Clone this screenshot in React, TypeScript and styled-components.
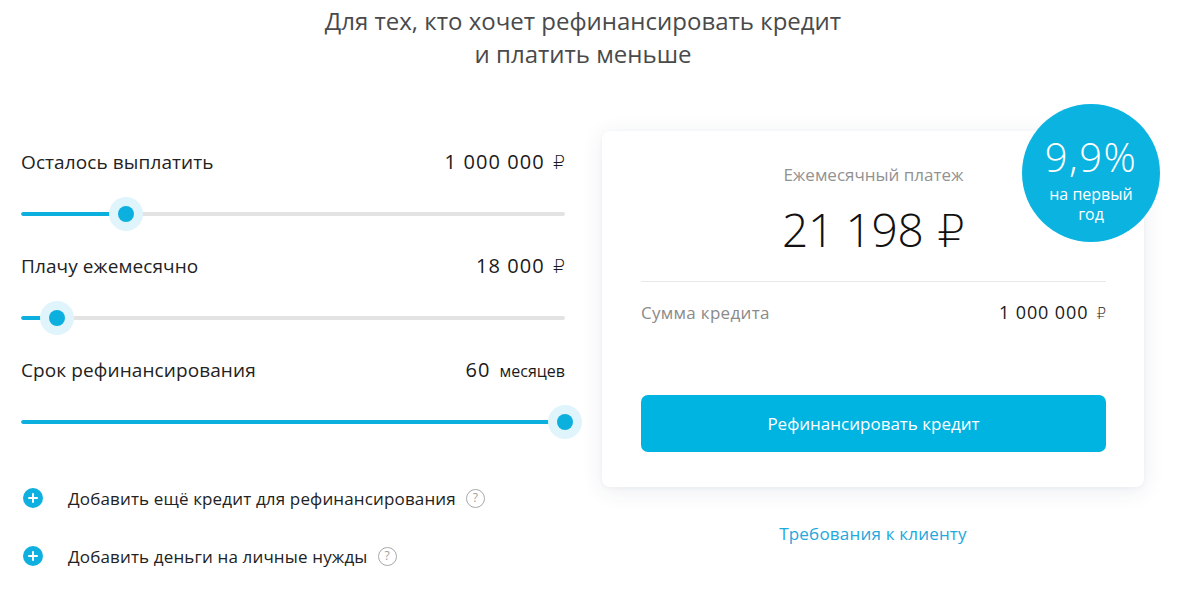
import React from "react";
import styled, { createGlobalStyle } from "styled-components";

const Global = createGlobalStyle`
  html, body { margin: 0; padding: 0; background: #fff; }
  body { font-family: "Open Sans", "Noto Sans", "DejaVu Sans", sans-serif; color: #222; }
  * { box-sizing: border-box; }
`;

const Page = styled.div`
  width: 1200px;
  height: 592px;
  overflow: hidden;
`;

const Title = styled.h1`
  margin: 0;
  padding-top: 4px;
  width: 1166px;
  text-align: center;
  font-size: 24px;
  line-height: 33px;
  font-weight: 400;
  color: #4a4a4a;
`;

const Main = styled.div`
  display: flex;
  align-items: flex-start;
  gap: 37px;
  padding-left: 21px;
  margin-top: 61px;
`;

const LeftCol = styled.div`
  width: 544px;
  padding-top: 19px;
  display: flex;
  flex-direction: column;
`;

const Block = styled.div`
  display: flex;
  flex-direction: column;
`;

const LabelRow = styled.div`
  display: flex;
  justify-content: space-between;
  align-items: baseline;
  height: 24px;
  line-height: 24px;
  font-size: 19px;
  color: #222;
`;

const Label = styled.span`
  letter-spacing: 0.1px;
`;

const Value = styled.span`
  font-size: 20px;
  letter-spacing: 1.1px;
  font-weight: 400;
  color: #1a1a1a;
`;

const Unit = styled.span<{ $small?: boolean }>`
  margin-left: ${(p) => (p.$small ? "9px" : "8px")};
  font-size: ${(p) => (p.$small ? "16px" : "19px")};
  font-family: ${(p) => (p.$small ? "inherit" : `"DejaVu Sans", sans-serif`)};
  font-weight: ${(p) => (p.$small ? 400 : 300)};
  color: #1a1a1a;
`;

const SliderWrap = styled.div`
  position: relative;
  height: 34px;
  margin: 23px 0;
  display: flex;
  align-items: center;
`;

const Track = styled.div`
  width: 100%;
  height: 4px;
  border-radius: 2px;
  background: #e3e3e3;
  overflow: hidden;
`;

const Fill = styled.div`
  height: 100%;
  background: #0bb0df;
  border-radius: 2px;
`;

const Thumb = styled.div`
  position: absolute;
  top: 0;
  width: 34px;
  height: 34px;
  margin-left: -17px;
  border-radius: 50%;
  background: #e0f4fb;
  display: flex;
  align-items: center;
  justify-content: center;
  &::after {
    content: "";
    width: 16px;
    height: 16px;
    border-radius: 50%;
    background: #0bb0df;
  }
`;

const AddList = styled.div`
  margin-top: 24px;
  display: flex;
  flex-direction: column;
  gap: 34px;
`;

const AddRow = styled.div`
  display: flex;
  align-items: center;
  height: 24px;
  font-size: 17px;
  letter-spacing: 0.15px;
  color: #222;
`;

const PlusIcon = styled.span`
  width: 20px;
  height: 20px;
  border-radius: 50%;
  background: #0fb0e0;
  margin-left: 2px;
  margin-right: 25px;
  position: relative;
  flex-shrink: 0;
  &::before, &::after {
    content: "";
    position: absolute;
    background: #fff;
    border-radius: 1px;
    left: 50%;
    top: 50%;
    transform: translate(-50%, -50%);
  }
  &::before { width: 10px; height: 2px; }
  &::after { width: 2px; height: 10px; }
`;

const Help = styled.span`
  width: 19px;
  height: 19px;
  border-radius: 50%;
  border: 1.3px solid #a8a8a8;
  color: #a0a0a0;
  font-size: 12px;
  line-height: 16px;
  text-align: center;
  letter-spacing: 0;
  margin-left: 10px;
  flex-shrink: 0;
`;

const RightCol = styled.div`
  width: 542px;
  display: flex;
  flex-direction: column;
  align-items: center;
`;

const Card = styled.div`
  position: relative;
  width: 100%;
  background: #fff;
  border-radius: 8px;
  box-shadow: 0 4px 22px rgba(30, 50, 90, 0.09), 0 1px 4px rgba(30, 50, 90, 0.04);
  padding: 32px 38px 35px 39px;
  display: flex;
  flex-direction: column;
`;

const Caption = styled.div`
  text-align: center;
  font-size: 17px;
  line-height: 24px;
  color: #929292;
`;

const Amount = styled.div`
  margin-top: 14px;
  text-align: center;
  font-size: 46px;
  line-height: 56px;
  font-weight: 300;
  color: #111;
  letter-spacing: -0.3px;
`;

const AmountUnit = styled.span`
  margin-left: 14px;
  font-family: "DejaVu Sans", sans-serif;
  font-weight: 200;
  font-size: 44px;
`;

const Divider = styled.hr`
  margin: 21px 0 0;
  border: none;
  height: 1px;
  background: #e8e8e8;
`;

const SumRow = styled.div`
  margin-top: 18px;
  display: flex;
  justify-content: space-between;
  align-items: baseline;
  height: 24px;
  line-height: 24px;
`;

const SumLabel = styled.span`
  font-size: 17px;
  letter-spacing: 0.3px;
  color: #8a8a8a;
`;

const SumValue = styled.span`
  font-size: 18px;
  letter-spacing: 0.9px;
  font-weight: 400;
  color: #1a1a1a;
`;

const SumUnit = styled.span`
  margin-left: 8px;
  font-family: "DejaVu Sans", sans-serif;
  font-size: 15px;
  font-weight: 300;
  letter-spacing: 0;
`;

const Button = styled.button`
  margin-top: 71px;
  height: 57px;
  width: 100%;
  border: none;
  border-radius: 7px;
  background: #00b4e1;
  color: #fff;
  font-family: inherit;
  font-size: 17px;
  cursor: pointer;
`;

const Badge = styled.div`
  position: absolute;
  right: -16px;
  top: -27px;
  width: 138px;
  height: 138px;
  border-radius: 50%;
  background: #0bb3e0;
  color: #fff;
  display: flex;
  flex-direction: column;
  align-items: center;
  padding-top: 30px;
`;

const BadgeRate = styled.div`
  font-size: 40px;
  line-height: 46px;
  font-weight: 300;
  letter-spacing: 1.5px;
`;

const BadgeNote = styled.div`
  margin-top: 4px;
  font-size: 16px;
  line-height: 20px;
  text-align: center;
`;

const Link = styled.a`
  margin-top: 35px;
  font-size: 17px;
  line-height: 24px;
  letter-spacing: 0.2px;
  color: #21a8dc;
  text-decoration: none;
`;

type SliderProps = { label: string; value: React.ReactNode; pos: number };

const SliderBlock = ({ label, value, pos }: SliderProps) => (
  <Block>
    <LabelRow>
      <Label>{label}</Label>
      <span>{value}</span>
    </LabelRow>
    <SliderWrap>
      <Track>
        <Fill style={{ width: `${pos}%` }} />
      </Track>
      <Thumb style={{ left: `${pos}%` }} />
    </SliderWrap>
  </Block>
);

export default function App() {
  return (
    <Page>
      <Global />
      <Title>
        Для тех, кто хочет рефинансировать кредит
        <br />и платить меньше
      </Title>
      <Main>
        <LeftCol>
          <SliderBlock
            label="Осталось выплатить"
            pos={19.3}
            value={
              <>
                <Value>1 000 000</Value>
                <Unit>₽</Unit>
              </>
            }
          />
          <SliderBlock
            label="Плачу ежемесячно"
            pos={6.6}
            value={
              <>
                <Value>18 000</Value>
                <Unit>₽</Unit>
              </>
            }
          />
          <SliderBlock
            label="Срок рефинансирования"
            pos={100}
            value={
              <>
                <Value>60</Value>
                <Unit $small>месяцев</Unit>
              </>
            }
          />
          <AddList>
            <AddRow>
              <PlusIcon />
              Добавить ещё кредит для рефинансирования
              <Help>?</Help>
            </AddRow>
            <AddRow>
              <PlusIcon />
              Добавить деньги на личные нужды
              <Help>?</Help>
            </AddRow>
          </AddList>
        </LeftCol>
        <RightCol>
          <Card>
            <Caption>Ежемесячный платеж</Caption>
            <Amount>
              21 198<AmountUnit>₽</AmountUnit>
            </Amount>
            <Divider />
            <SumRow>
              <SumLabel>Сумма кредита</SumLabel>
              <SumValue>
                1 000 000<SumUnit>₽</SumUnit>
              </SumValue>
            </SumRow>
            <Button>Рефинансировать кредит</Button>
            <Badge>
              <BadgeRate>9,9%</BadgeRate>
              <BadgeNote>
                на первый
                <br />
                год
              </BadgeNote>
            </Badge>
          </Card>
          <Link href="#">Требования к клиенту</Link>
        </RightCol>
      </Main>
    </Page>
  );
}
